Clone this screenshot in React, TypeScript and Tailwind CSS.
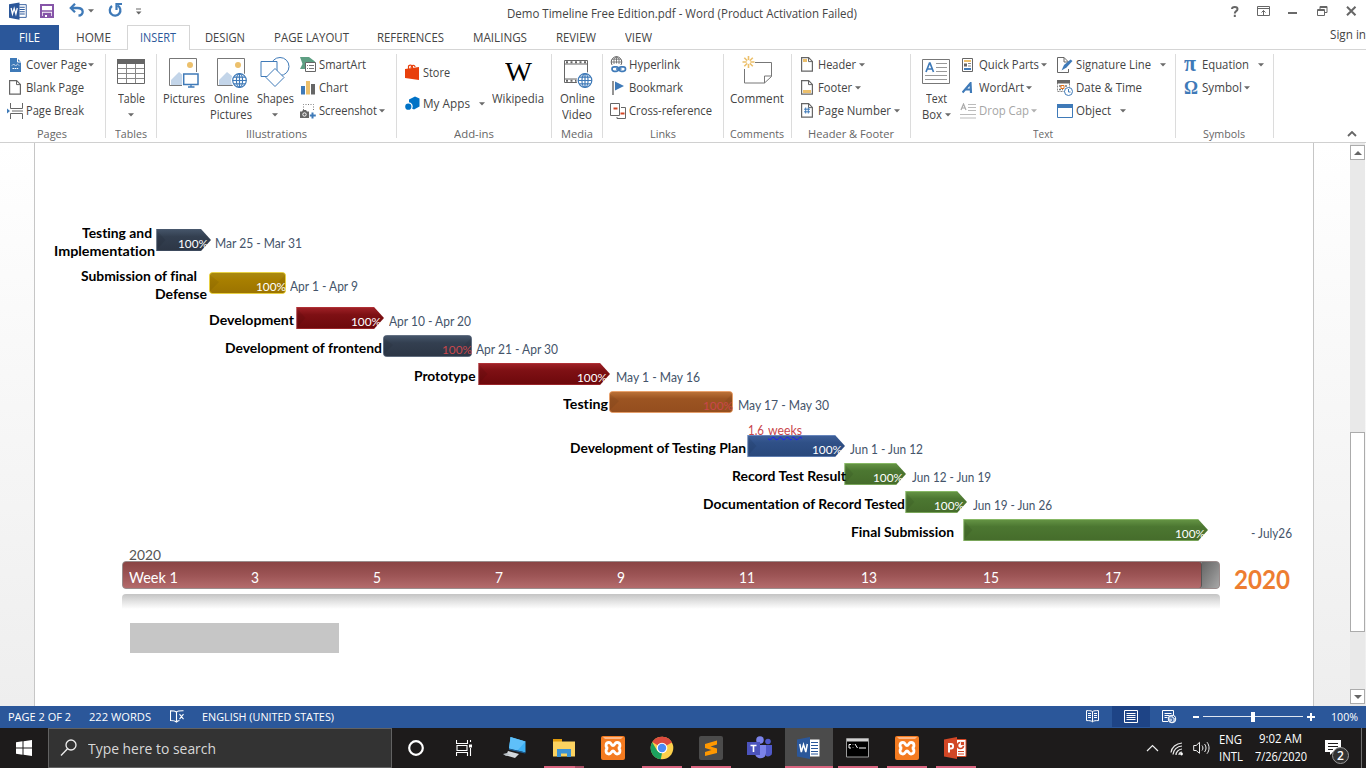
import React, { useLayoutEffect, useRef } from "react";

const UI = "font-['Open_Sans','Noto_Sans',sans-serif]";
const DOC = "font-['Lato','Open_Sans',sans-serif] [font-variant-ligatures:none]";

/* One line of text, condensed or widened to fill the width of its box. */
function Fit({ className = "", children }: { className?: string; children: React.ReactNode }) {
  const box = useRef<HTMLSpanElement>(null);
  const ink = useRef<HTMLSpanElement>(null);
  useLayoutEffect(() => {
    if (!box.current || !ink.current) return;
    ink.current.style.transform = "none";
    const natural = ink.current.getBoundingClientRect().width;
    const target = box.current.getBoundingClientRect().width;
    if (natural > 0) ink.current.style.transform = `scaleX(${target / natural})`;
  });
  return (
    <span ref={box} className={`block shrink-0 whitespace-nowrap ${className}`}>
      <span ref={ink} className="inline-block origin-left">{children}</span>
    </span>
  );
}

function Arrow({ className = "", color = "#6a6a6a" }: { className?: string; color?: string }) {
  return (
    <svg className={`shrink-0 ${className}`} width="6" height="4" viewBox="0 0 6 4">
      <path d="M0 .3h6L3 3.6z" fill={color} />
    </svg>
  );
}

type BoxProps = { w: number; h: number; className?: string; children: React.ReactNode };
function Ico({ w, h, className = "", children }: BoxProps) {
  return (
    <svg className={`block shrink-0 ${className}`} width={w} height={h} viewBox={`0 0 ${w} ${h}`} fill="none">
      {children}
    </svg>
  );
}

/* ---------- title bar and tabs ---------- */

function WordMark({ size = 17 }: { size?: number }) {
  return (
    <svg className="block shrink-0" width={size} height={size} viewBox="0 0 24 24">
      <path d="M12 3.5h11v17H12z" fill="#fff" stroke="#2b579a" strokeWidth="1.2" />
      <path d="M14 7h7M14 10h7M14 13h7M14 16h7" stroke="#2b579a" strokeWidth="1.5" />
      <path d="M0 3 14 .5v23L0 21z" fill="#2b579a" />
      <path d="m2.8 8 1.8 8 2.3-7.5L9.2 16 11 8" fill="none" stroke="#fff" strokeWidth="1.7" />
    </svg>
  );
}

function TitleBar() {
  return (
    <div className="flex h-[25px] items-start">
      <div className="ml-[9px] mt-[2px]"><WordMark size={18} /></div>
      <Ico w={14} h={14} className="ml-[13px] mt-1">
        <path d="M1 1h12v12H1z" stroke="#8655a8" strokeWidth="2" />
        <path d="M1 7h12M3.5 13V9.500h7V13" stroke="#8655a8" strokeWidth="1.6" />
        <path d="M4 10h6v4H4z" fill="#8655a8" /><path d="M5 11h2v2H5z" fill="#fff" />
      </Ico>
      <Ico w={15} h={14} className="ml-[15px] mt-[3px]">
        <path d="M2 5h6.500c7 0 6.500 7.500 1 7.500" stroke="#3f7ab8" strokeWidth="2.300" />
        <path d="M6 .8 1.800 5 6 9.200" stroke="#3f7ab8" strokeWidth="2.300" />
      </Ico>
      <Arrow className="ml-[4px] mt-[9px]" />
      <Ico w={15} h={15} className="ml-[14px] mt-[3px]">
        <path d="M9.500 2.600A5.300 5.300 0 1 1 4 3" stroke="#3f7ab8" strokeWidth="2.300" />
        <path d="M14 1H8.500v6" stroke="#3f7ab8" strokeWidth="2.200" />
      </Ico>
      <Ico w={6} h={7} className="ml-[13px] mt-[8px]">
        <path d="M0 1h5" stroke="#666" /><path d="M0 3.500h5.500L2.700 6.500z" fill="#666" />
      </Ico>
      <Fit className="ml-[365px] mt-[4px] w-[350px] text-[12px] leading-[19px] text-[#444]">
        Demo Timeline Free Edition.pdf - Word (Product Activation Failed)
      </Fit>
      <Ico w={8} h={12} className="ml-[374px] mt-[6px]">
        <path d="M1 3C1 .4 6.500.4 6.500 3S3.800 4.800 3.800 7.500M3.800 8.700V11" stroke="#666" strokeWidth="2" />
      </Ico>
      <Ico w={14} h={11} className="ml-[18px] mt-[6px]">
        <path d="M.5.5h12v9H.5zM0 2.500h13" stroke="#666" />
        <path d="M6.500 9V4.500M4.500 6.500l2-2 2 2" stroke="#666" />
      </Ico>
      <div className="ml-[17px] mt-[12px] h-[2px] w-[9px] bg-[#6a6a6a]" />
      <Ico w={11} h={10} className="ml-[20px] mt-[6px]">
        <path d="M.5 3.500h7v6h-7zM.5 4.500h7M3 3V.5h7v6H8M3 1.500h7" stroke="#666" />
      </Ico>
      <Ico w={11} h={10} className="ml-[18px] mt-[6px]">
        <path d="m1 .8 8.500 8.500M9.500.8 1 9.300" stroke="#666" strokeWidth="2" />
      </Ico>
    </div>
  );
}

function Tabs() {
  return (
    <div className="flex h-[25px] border-b border-[#d5d5d5] text-[12px] leading-[26px] text-[#444]">
      <div className="h-[25px] w-[59px] bg-[#2b579a] pl-[19px] text-white"><Fit className="w-[21px]">FILE</Fit></div>
      <Fit className="ml-[17px] w-[35px]">HOME</Fit>
      <div className="ml-[16px] h-[25px] w-[63px] border-x border-t border-[#d5d5d5] bg-white pl-[12px] leading-[24px] text-[#2b579a]">
        <Fit className="w-[36px]">INSERT</Fit>
      </div>
      <Fit className="ml-[15px] w-[40px]">DESIGN</Fit>
      <Fit className="ml-[29px] w-[75px]">PAGE LAYOUT</Fit>
      <Fit className="ml-[28px] w-[67px]">REFERENCES</Fit>
      <Fit className="ml-[29px] w-[54px]">MAILINGS</Fit>
      <Fit className="ml-[29px] w-[40px]">REVIEW</Fit>
      <Fit className="ml-[29px] w-[27px]">VIEW</Fit>
      <Fit className="ml-auto w-[36px] leading-[20px]">Sign in</Fit>
    </div>
  );
}

/* ---------- ribbon ---------- */

type GroupProps = { className: string; label: string; labelClass: string; children: React.ReactNode };
function Group({ className, label, labelClass, children }: GroupProps) {
  return (
    <div className={`mt-1 flex h-[84px] shrink-0 flex-col border-r border-[#dcdcdc] ${className}`}>
      <div className="flex h-[71px] shrink-0 items-start">{children}</div>
      <Fit className={`text-[11.500px] leading-[18px] text-[#666] ${labelClass}`}>{label}</Fit>
    </div>
  );
}

type RowProps = { icon: React.ReactNode; text: string; tw: string; arrow?: string; iconBox?: string; muted?: boolean };
function Row({ icon, text, tw, arrow, iconBox = "w-[19px]", muted }: RowProps) {
  return (
    <div className={`flex h-[23px] items-center ${muted ? "text-[#a5a5a5]" : ""}`}>
      <div className={`flex h-[18px] shrink-0 items-center ${iconBox}`}>{icon}</div>
      <Fit className={tw}>{text}</Fit>
      {arrow && <Arrow className={arrow} color={muted ? "#b0b0b0" : "#6a6a6a"} />}
    </div>
  );
}

type BigProps = { className: string; icon: React.ReactNode; a: string; aw: string; b?: React.ReactNode };
function Big({ className, icon, a, aw, b }: BigProps) {
  return (
    <div className={`flex shrink-0 flex-col items-center ${className}`}>
      <div className="flex h-[37px] items-start pt-[2px]">{icon}</div>
      <Fit className={`leading-[16px] ${aw}`}>{a}</Fit>
      <div className="flex h-[16px] items-center leading-[16px]">{b}</div>
    </div>
  );
}

function Globe({ x, y, r }: { x: number; y: number; r: number }) {
  return (
    <g stroke="#3f7ab8" strokeWidth="1.200">
      <circle cx={x} cy={y} r={r} fill="#fff" />
      <ellipse cx={x} cy={y} rx={r * 0.45} ry={r} />
      <path d={`M${x - r} ${y}h${2 * r}M${x} ${y - r}v${2 * r}M${x - r * 0.85} ${y - r * 0.5}h${r * 1.7}M${x - r * 0.85} ${y + r * 0.5}h${r * 1.7}`} />
    </g>
  );
}

function Photo() {
  return (
    <>
      <path d="M.5.5h27v27H.5z" fill="#fff" stroke="#777" />
      <circle cx="21" cy="7" r="3" fill="#ecc06c" />
      <path d="M2 27V22l8-8 5 4v9z" fill="#c3d5e9" />
    </>
  );
}

function PageIcon({ kind }: { kind: "blank" | "header" | "footer" | "number" }) {
  return (
    <Ico w={12} h={15}>
      <path d="M.6.600h7l3.800 3.800v9.800H.6z" fill="#fff" stroke="#666" strokeWidth="1.200" />
      <path d="M7.500.600v4h4" stroke="#666" />
      {kind === "header" && <path d="M2 2h4v3H2z" fill="#ecc06c" />}
      {kind === "footer" && <path d="M2 10h8v3H2z" fill="#ecc06c" />}
      {kind === "number" && <path d="M4.700 4.500v6M7.300 4.500v6M3 6.200h6M3 8.800h6" stroke="#3f7ab8" />}
    </Ico>
  );
}

function Ribbon() {
  return (
    <div className="flex h-[93px] border-b border-[#d0d0d0] text-[12px] leading-[18px] text-[#444]">
      <Group className="w-[106px]" label="Pages" labelClass="ml-[37px] w-[30px]">
        <div className="-mt-px ml-[7px]">
          <Row iconBox="w-[19px] pl-[3px]" tw="w-[61px]" arrow="ml-[1px]" text="Cover Page" icon={
            <Ico w={12} h={14}><path d="M0 0h7l4 4v10H0z" fill="#3f7ab8" /><path d="M7.500 0v4h4" stroke="#fff" /><path d="m2 7.500 1.500-1.500L5.500 8l2-2L9 7.500M2.500 10.500h6" stroke="#fff" strokeDasharray="1.500 .6" /></Ico>} />
          <Row iconBox="w-[19px] pl-[2px]" tw="w-[58px]" text="Blank Page" icon={<PageIcon kind="blank" />} />
          <Row tw="w-[58px]" text="Page Break" icon={
            <Ico w={16} h={16}><path d="M0 5.500 3 8 0 10.500z" fill="#3f7ab8" /><path d="M3.500 0v5.500h12V0M3.500 16v-5.500h12V16M5 8h11" stroke="#666" /></Ico>} />
        </div>
      </Group>

      <Group className="w-[51px]" label="Tables" labelClass="ml-[9px] w-[32px]">
        <Big className="ml-[8px] w-[34px]" aw="w-[27px]" a="Table" b={<Arrow />} icon={
          <Ico w={28} h={28} className="mt-[3px]"><path d="M.5 1h27v23.500H.5z" fill="#fff" stroke="#666" /><path d="M0 0h28v5H0z" fill="#666" /><path d="M1 9.500h26M1 14.500h26M1 19.500h26M9.500 5v19M18.500 5v19" stroke="#888" /></Ico>} />
      </Group>

      <Group className="w-[240px]" label="Illustrations" labelClass="ml-[89px] w-[61px]">
        <Big className="ml-[5px] w-[44px]" aw="w-[42px]" a="Pictures" icon={
          <Ico w={30} h={31} className="mt-[2px]"><Photo /><path d="M13 14h17v14H13z" fill="#fff" /><path d="M14.700 16h14.300v10.500H14.700z" stroke="#3f7ab8" strokeWidth="1.500" fill="#fff" /><path d="M22 26.500v3M19 29h6.500" stroke="#3f7ab8" strokeWidth="1.300" /></Ico>} />
        <Big className="ml-[2px] w-[46px]" aw="w-[35px]" a="Online" b={<Fit className="w-[42px]">Pictures</Fit>} icon={
          <Ico w={31} h={31} className="ml-[2px] mt-[2px]"><Photo /><circle cx="22.500" cy="22.500" r="8.500" fill="#fff" /><Globe x={22.5} y={22.5} r={6.800} /></Ico>} />
        <Big className="ml-0 w-[42px]" aw="w-[37px]" a="Shapes" b={<Arrow />} icon={
          <Ico w={30} h={31} className="mt-[1px]"><circle cx="20" cy="9.500" r="9" stroke="#3f7ab8" /><path d="M1 4.500h16v15H1z" fill="#fff" stroke="#3f7ab8" /><path d="m15 11.500 9 9-9 9-9-9z" fill="#fff" stroke="#3f7ab8" /></Ico>} />
        <div className="-mt-px ml-[4px]">
          <Row tw="w-[47px]" text="SmartArt" icon={
            <Ico w={16} h={17}><path d="M0 1h9l6 4.500-3 4.500H5v3H0l2.500-5z" fill="#5e9f83" /><path d="M5.500 6.500h10v9h-10z" fill="#fff" stroke="#666" /><path d="M7 9.500h1M7 12.500h1M9 9.500h5M9 12.500h5" stroke="#777" /></Ico>} />
          <Row tw="w-[29px]" text="Chart" icon={
            <Ico w={16} h={15}><path d="M1 6h4v8.500H1z" fill="#3f7ab8" /><path d="M6 1h4v13.500H6z" fill="#ecc06c" /><path d="M11 4h4v10.500h-4z" fill="#666" /></Ico>} />
          <Row tw="w-[58px]" arrow="ml-[2px]" text="Screenshot" icon={
            <Ico w={16} h={16}><path d="M3.500 7V1.500h10v7" stroke="#777" strokeDasharray="1 1.500" /><path d="M0 8.500h2l1-1.500h3l1 1.500h2V15H0z" fill="#666" /><circle cx="4.500" cy="11.500" r="1.700" stroke="#fff" /><path d="M12.500 9.500v6M9.800 12.500h6" stroke="#3f7ab8" strokeWidth="2" /></Ico>} />
        </div>
      </Group>

      <Group className="w-[155px]" label="Add-ins" labelClass="ml-[57px] w-[40px]">
        <div className="ml-[8px] flex flex-col gap-[8px] pt-[7px]">
          <Row iconBox="w-[18px]" tw="w-[27px]" text="Store" icon={
            <Ico w={15} h={17}><path d="m0 5 14-2v13L0 14z" fill="#e8400c" /><path d="M3.500 5V2c2-2 4-.5 4 1V5M6 4C6 1 10 .5 10 3" stroke="#e8400c" strokeWidth="1.200" /></Ico>} />
          <Row iconBox="w-[18px]" tw="w-[47px]" arrow="ml-[9px]" text="My Apps" icon={
            <Ico w={15} h={15}><path d="m4 3.500 6-3 4.500 2v8L9 13.500 4 11z" fill="#0072c6" /><circle cx="3.500" cy="10.500" r="4.200" fill="#fff" /><circle cx="3.300" cy="10.700" r="3.100" fill="#0072c6" /></Ico>} />
        </div>
        <Big className="ml-[6px] w-[54px]" aw="w-[52px]" a="Wikipedia" icon={
          <Fit className="mt-[3px] w-[27px] font-['Liberation_Serif',serif] text-[27px] leading-[26px] text-black">W</Fit>} />
      </Group>

      <Group className="w-[51px]" label="Media" labelClass="ml-[9px] w-[32px]">
        <Big className="ml-[6px] w-[38px]" aw="w-[35px]" a="Online" b={<Fit className="w-[30px]">Video</Fit>} icon={
          <Ico w={29} h={29} className="ml-[3px] mt-[4px]"><path d="M.5.5h23v22H.5zM.5 4h23M.5 19h23" stroke="#666" /><path d="M2 2.200h20M2 20.800h11" stroke="#666" strokeWidth="2" strokeDasharray="2 2.500" /><circle cx="21" cy="20.500" r="8.500" fill="#fff" /><Globe x={21} y={20.5} r={6.800} /></Ico>} />
      </Group>

      <Group className="w-[121px]" label="Links" labelClass="ml-[47px] w-[26px]">
        <div className="-mt-px ml-[7px]">
          <Row tw="w-[51px]" text="Hyperlink" icon={
            <Ico w={17} h={17}><circle cx="6.500" cy="6" r="5.300" stroke="#666" /><path d="M1 6h11M6.500.500v7M2 3.200h9M4 8V3.500l2-3M9 8V3.500l-2-3" stroke="#666" strokeWidth=".8" /><path d="M0 9h17v8H0z" fill="#fff" /><rect x="2" y="10.800" width="6.500" height="4.500" rx="2.200" stroke="#3f7ab8" strokeWidth="1.700" /><rect x="9" y="10.800" width="6.500" height="4.500" rx="2.200" stroke="#3f7ab8" strokeWidth="1.700" /><path d="M6 13h5.500" stroke="#3f7ab8" strokeWidth="1.600" /></Ico>} />
          <Row iconBox="w-[19px] pl-[2px]" tw="w-[54px]" text="Bookmark" icon={
            <Ico w={13} h={14}><path d="M1 0v14" stroke="#666" strokeWidth="1.400" /><path d="M3 .5 12 5 3 9.500z" fill="#3f7ab8" /></Ico>} />
          <Row tw="w-[83px]" text="Cross-reference" icon={
            <Ico w={16} h={16}><path d="M.5.5h9v12h-9z" stroke="#666" /><path d="M3.500 4.500h4v2h-4z" fill="#d24726" /><path d="M7 14v1.500h8.500v-11H11" stroke="#666" /><path d="M10.500 9.500h4v2h-4z" fill="#d24726" /></Ico>} />
        </div>
      </Group>

      <Group className="w-[68px]" label="Comments" labelClass="ml-[6px] w-[54px]">
        <Big className="ml-[6px] w-[54px]" aw="w-[54px]" a="Comment" icon={
          <Ico w={30} h={30}><path d="M13 6.500h16.500v14l-7 6.500h-20V13M29.500 20h-7v7" stroke="#777" /><path d="M6.500 0v12M.5 6h12M2.300 1.800l8.500 8.500M10.800 1.800l-8.500 8.500" stroke="#ecc06c" strokeWidth="1.600" /><circle cx="6.500" cy="6" r="2" fill="#fff" /></Ico>} />
      </Group>

      <Group className="w-[119px]" label="Header & Footer" labelClass="ml-[16px] w-[86px]">
        <div className="-mt-px ml-[9px]">
          <Row iconBox="w-[17px]" tw="w-[38px]" arrow="ml-[3px]" text="Header" icon={<PageIcon kind="header" />} />
          <Row iconBox="w-[17px]" tw="w-[34px]" arrow="ml-[3px]" text="Footer" icon={<PageIcon kind="footer" />} />
          <Row iconBox="w-[17px]" tw="w-[73px]" arrow="ml-[3px]" text="Page Number" icon={<PageIcon kind="number" />} />
        </div>
      </Group>

      <Group className="w-[265px]" label="Text" labelClass="ml-[122px] w-[20px]">
        <Big className="ml-[10px] w-[30px]" aw="w-[21px]" a="Text" b={<><Fit className="w-[20px]">Box</Fit><Arrow className="ml-[3px]" /></>} icon={
          <Ico w={28} h={25} className="mt-[3px]"><path d="M.5.500h27v24H.5z" fill="#fff" stroke="#777" /><path d="m4 13 3.500-9h.5l3.500 9M5.300 10h5" stroke="#3f7ab8" strokeWidth="1.700" /><path d="M14 4.500h11M14 8.500h11M14 12.500h11M3 16.500h22M3 20.500h22" stroke="#999" /></Ico>} />
        <div className="-mt-px ml-[9px]">
          <Row iconBox="w-[19px] pl-[2px]" tw="w-[60px]" arrow="ml-[2px]" text="Quick Parts" icon={
            <Ico w={11} h={14}><path d="M.5.500h10v13H.5z" stroke="#666" /><path d="M2 2h7v2H2z" fill="#ecc06c" /><path d="M2 5.500h3v3H2z" fill="#666" /><path d="M6 5.500h3M6 8h3" stroke="#888" /><path d="M2 10h7v2H2z" fill="#3f7ab8" /></Ico>} />
          <Row iconBox="w-[19px] pl-[2px]" tw="w-[45px]" arrow="ml-[2px]" text="WordArt" icon={
            <Ico w={12} h={12}><path d="M.5 10.500 8.500 1.200 9 11M3.500 7.500h6" stroke="#3f7ab8" strokeWidth="2.200" /></Ico>} />
          <Row muted tw="w-[50px]" arrow="ml-[2px]" text="Drop Cap" icon={
            <Ico w={16} h={16}><path d="M1 7 3.500 1 6 7M2 5h3" stroke="#aaa" strokeWidth="1.200" /><path d="M8 1.500h8M8 4.500h8M8 7.500h8M0 11.500h16M0 15h16" stroke="#bbb" /></Ico>} />
        </div>
        <div className="-mt-px ml-[10px] w-[112px] shrink-0">
          <Row tw="w-[75px]" arrow="ml-[9px]" text="Signature Line" icon={
            <Ico w={16} h={16}><path d="M9 15.500H.5V.500H7L11.500 5M7 .5V5h4M11.500 12v3.500H8" stroke="#666" /><path d="M4.500 13.500 7 8l6.500-5.500 2 1.500-6 6.500z" fill="#3f7ab8" /></Ico>} />
          <Row tw="w-[66px]" text="Date & Time" icon={
            <Ico w={16} h={16}><path d="M.5.500h12v11H.5z" stroke="#888" strokeDasharray="2 1" /><path d="M0 0h13v3.500H0z" fill="#666" /><path d="M2 6h9M2 9.500h4" stroke="#777" strokeWidth="1.500" strokeDasharray="2 1" /><path d="M4 5.500h3v3H4z" stroke="#e0701c" fill="#fff" /><circle cx="11.500" cy="11.500" r="4" fill="#fff" stroke="#3f7ab8" /><path d="M11.500 9v3h2" stroke="#3f7ab8" /></Ico>} />
          <Row tw="w-[35px]" arrow="ml-[9px]" text="Object" icon={
            <Ico w={16} h={14}><path d="M.5.500h15v13H.5z" fill="#fff" stroke="#3f7ab8" /><path d="M0 0h16v4H0z" fill="#3f7ab8" /></Ico>} />
        </div>
      </Group>

      <Group className="w-[98px]" label="Symbols" labelClass="ml-[27px] w-[42px]">
        <div className="-mt-px ml-[8px]">
          <Row iconBox="w-[18px]" tw="w-[47px]" arrow="ml-[9px]" text="Equation" icon={
            <Fit className="-mt-[2px] w-[12px] font-['Liberation_Serif',serif] text-[23px] font-bold leading-[14px] text-[#3f7ab8]">π</Fit>} />
          <Row iconBox="w-[18px]" tw="w-[40px]" arrow="ml-[2px]" text="Symbol" icon={
            <Fit className="w-[14px] font-['Liberation_Serif',serif] text-[18px] font-bold leading-[16px] text-[#3f7ab8]">Ω</Fit>} />
        </div>
      </Group>

      <Ico w={10} h={6} className="ml-[73px] mt-[81px]"><path d="m1 5 4-4 4 4" stroke="#666" strokeWidth="1.800" /></Ico>
    </div>
  );
}

/* ---------- document ---------- */

type Tone = "slate" | "gold" | "red" | "brown" | "blue" | "green";
type Task = {
  label: string[]; ends: number[]; widths: number[]; x: number; w: number; gap: number; tone: Tone;
  arrow: boolean; pct: string; date: string; dateX: number; dateW: number; note?: string;
};

const tones: Record<Tone, { top: string; mid: string; low: string; edge: string }> = {
  slate: { top: "#46566b", mid: "#333f50", low: "#2c3645", edge: "#4b5a70" },
  gold: { top: "#a98a12", mid: "#a87f00", low: "#9b7300", edge: "#f0d62a" },
  red: { top: "#a12228", mid: "#7e1014", low: "#6c080b", edge: "#bb3c42" },
  brown: { top: "#bd7338", mid: "#9c5422", low: "#944e1e", edge: "#ee9a5c" },
  blue: { top: "#3f6099", mid: "#2f5087", low: "#29487b", edge: "#8aa6da" },
  green: { top: "#679646", mid: "#4c7731", low: "#456c2b", edge: "#a3d47f" },
};

const tasks: Task[] = [
  { label: ["Testing and", "Implementation"], ends: [152, 155], widths: [70, 101], x: 156, w: 55, gap: 0, tone: "slate", arrow: true, pct: "#fff", date: "Mar 25 - Mar 31", dateX: 215, dateW: 87 },
  { label: ["Submission of final", "Defense"], ends: [197, 207], widths: [116, 52], x: 209, w: 77, gap: 21, tone: "gold", arrow: false, pct: "#fff", date: "Apr 1 - Apr 9", dateX: 290, dateW: 68 },
  { label: ["Development"], ends: [294], widths: [85], x: 296, w: 88, gap: 13, tone: "red", arrow: true, pct: "#fff", date: "Apr 10 - Apr 20", dateX: 389, dateW: 82 },
  { label: ["Development of frontend"], ends: [382], widths: [157], x: 383, w: 89, gap: 6, tone: "slate", arrow: false, pct: "#c9474c", date: "Apr 21 - Apr 30", dateX: 476, dateW: 82 },
  { label: ["Prototype"], ends: [475.5], widths: [61.5], x: 478, w: 132, gap: 6, tone: "red", arrow: true, pct: "#fff", date: "May 1 - May 16", dateX: 616, dateW: 84 },
  { label: ["Testing"], ends: [608], widths: [45], x: 609, w: 124, gap: 6, tone: "brown", arrow: false, pct: "#c9474c", date: "May 17 - May 30", dateX: 738, dateW: 91 },
  { label: ["Development of Testing Plan"], ends: [746], widths: [176], x: 747, w: 98, gap: 22, tone: "blue", arrow: true, pct: "#fff", date: "Jun 1 - Jun 12", dateX: 850, dateW: 73, note: "1.6" },
  { label: ["Record Test Result"], ends: [846], widths: [114], x: 844, w: 62, gap: 6, tone: "green", arrow: true, pct: "#fff", date: "Jun 12 - Jun 19", dateX: 912, dateW: 79 },
  { label: ["Documentation of Record Tested"], ends: [905], widths: [202], x: 905, w: 62, gap: 6, tone: "green", arrow: true, pct: "#fff", date: "Jun 19 - Jun 26", dateX: 973, dateW: 79 },
  { label: ["Final Submission"], ends: [954], widths: [103], x: 963, w: 245, gap: 6, tone: "green", arrow: true, pct: "#fff", date: "- July26", dateX: 1251, dateW: 41 },
];

function Bar({ task, id }: { task: Task; id: string }) {
  const c = tones[task.tone];
  const w = task.w;
  return (
    <svg className="block" width={w} height="22" viewBox={`0 0 ${w} 22`}>
      <defs>
        <linearGradient id={id} x1="0" y1="0" x2="0" y2="1">
          <stop offset="0" stopColor={c.top} /><stop offset=".35" stopColor={c.mid} /><stop offset="1" stopColor={c.low} />
        </linearGradient>
      </defs>
      {task.arrow ? (
        <>
          <path d={`M.5 0H${w - 10}L${w} 11 ${w - 10} 22H.5z`} fill={`url(#${id})`} />
          <path d="M.5 1v20l9-10z" fill="#000" opacity=".07" />
          <path d={`M.5.500H${w - 10}M.5 21.500H${w - 10}M.8 0v22`} stroke={c.edge} strokeWidth=".7" opacity=".8" />
        </>
      ) : (
        <>
          <rect x=".5" y=".5" width={w - 1} height="21" rx="3" fill={`url(#${id})`} />
          <path d={`M1 3v16l9-9zM${w - 1} 3v16l-7-9z`} fill="#000" opacity=".06" />
          <rect x=".5" y=".5" width={w - 1} height="21" rx="3" fill="none" stroke={c.edge} strokeWidth=".9" opacity=".8" />
        </>
      )}
    </svg>
  );
}

/* A line of text whose width comes from the task data. */
function Sized({ w, children }: { w: number; children: React.ReactNode }) {
  return (
    <div style={{ width: w }}>
      <Fit className="w-full">{children}</Fit>
    </div>
  );
}

function TaskRow({ task, i }: { task: Task; i: number }) {
  const two = task.label.length === 2;
  return (
    <div className="relative flex h-[22px] items-start" style={{ marginTop: task.gap }}>
      <div className={`relative z-10 shrink-0 text-[14px] font-bold leading-[18px] text-black ${two ? "-mt-[5px]" : "mt-[4px]"}`} style={{ width: task.x - 35 }}>
        {task.label.map((line, k) => (
          <div key={line} style={{ marginLeft: task.ends[k] - task.widths[k] - 35 }}>
            <Sized w={task.widths[k]}>{line}</Sized>
          </div>
        ))}
      </div>
      <div className="relative h-[22px] shrink-0" style={{ width: task.w }}>
        <Bar task={task} id={`bar${i}`} />
        <div className={`absolute top-[6px] text-[12px] leading-[17px] ${task.arrow ? "right-[3px]" : "right-0"}`} style={{ color: task.pct }}>
          <Fit className="w-[30px]">100%</Fit>
        </div>
        {task.note && (
          <div className="absolute -top-[12px] left-px flex gap-[4px] text-[12.500px] leading-[16px] text-[#c9474c]">
            <Fit className="w-[16px]">{task.note}</Fit>
            <Fit className="w-[34px]">
              <span className="underline decoration-[#1a1aff] decoration-wavy decoration-1 underline-offset-1">weeks</span>
            </Fit>
          </div>
        )}
      </div>
      <div className="mt-[6px] text-[12.500px] leading-[17px] text-[#44546a]" style={{ marginLeft: task.dateX - task.x - task.w }}>
        <Sized w={task.dateW}>{task.date}</Sized>
      </div>
    </div>
  );
}

function WeekAxis() {
  return (
    <div className="ml-[87px] mt-[5px]">
      <Fit className="ml-[7px] w-[32px] text-[14px] leading-[17px] text-[#555]">2020</Fit>
      <div className="-mt-[2px] flex items-start">
        <div className="flex h-[28px] w-[1098px] overflow-hidden rounded-[4px] border border-[#9a8c8c] bg-[#8b8b8b]">
          <div className="flex h-full w-[1079px] shrink-0 overflow-hidden rounded-r-[3px] border-r border-[#555] bg-linear-to-b from-[#8a4444] via-[#9c5455] to-[#b46b6c] pl-[6px] pt-[6px] text-[15px] leading-[19px] text-white">
            <div className="w-[122px] shrink-0"><Fit className="w-[49px]">Week 1</Fit></div>
            {["3", "5", "7", "9"].map((n) => <div key={n} className="w-[122px] shrink-0"><Fit className="w-[8px]">{n}</Fit></div>)}
            {["11", "13", "15", "17"].map((n) => <div key={n} className="w-[122px] shrink-0"><Fit className="w-[16px]">{n}</Fit></div>)}
          </div>
          <div className="h-full flex-1 bg-linear-to-br from-[#666] via-[#858585] to-[#a8a8a8]" />
        </div>
        <Fit className="ml-[14px] mt-[4px] w-[56px] text-[26px] font-bold leading-[28px] text-[#ed7d31]">2020</Fit>
      </div>
      <div className="mt-px h-[15px] w-[1098px] rounded-t-[4px] bg-linear-to-b from-[#c4c4c4] via-[#e3e3e3] to-white" />
    </div>
  );
}

function Document() {
  return (
    <div className="flex h-[563px] bg-linear-to-b from-white to-[#eeeeee]">
      <div className={`ml-[34px] w-[1280px] border-x border-[#c6c6c6] bg-white pt-[86px] ${DOC}`}>
        {tasks.map((t, i) => <TaskRow key={t.date} task={t} i={i} />)}
        <WeekAxis />
        <div className="ml-[95px] mt-[14px] h-[30px] w-[209px] bg-[#c6c6c6]" />
      </div>
      <div className="ml-auto mr-px flex w-[15px] flex-col items-center bg-[#e9e9e9] pt-[2px]">
        <div className="flex h-[15px] w-[15px] items-center justify-center border border-[#ababab] bg-white">
          <Ico w={8} h={4}><path d="M0 4 4 0l4 4z" fill="#666" /></Ico>
        </div>
        <div className="mt-[272px] h-[200px] w-[15px] border border-[#ababab] bg-white" />
        <div className="mb-[2px] mt-auto flex h-[15px] w-[15px] items-center justify-center border border-[#ababab] bg-white">
          <Ico w={8} h={4}><path d="m0 0 4 4 4-4z" fill="#666" /></Ico>
        </div>
      </div>
    </div>
  );
}

/* ---------- status bar ---------- */

function StatusBar() {
  return (
    <div className="flex h-[22px] items-center bg-[#2b579a] pb-px text-[11.500px] leading-[19px] text-white">
      <Fit className="-mt-px ml-[8px] w-[63px]">PAGE 2 OF 2</Fit>
      <Fit className="-mt-px ml-[18px] w-[62px]">222 WORDS</Fit>
      <Ico w={15} h={13} className="ml-[19px]">
        <path d="M6.500 11.500V2C5 .8 3 .8.500.8v9.700c3 0 4.500 0 6 1.500 1-1 2-1.300 3-1.500M6.500 2C7.500 1 10 .8 12.500.8h1M9.500 4.200l4 5M13.500 4.200l-4 5" stroke="#fff" strokeWidth="1.100" />
      </Ico>
      <Fit className="-mt-px ml-[17px] w-[132px]">ENGLISH (UNITED STATES)</Fit>
      <Ico w={13} h={13} className="ml-[752px]">
        <path d="M6.500 11.800V1.500C5 .6 3 .6.500.6v10c3 0 4.500 0 6 1.200 1.500-1.200 3-1.200 6-1.200V.6c-2.500 0-4.500 0-6 .9M2 3.500h3M2 5.500h3M2 7.500h3M8 3.500h3M8 5.500h3M8 7.500h3" stroke="#fff" />
      </Ico>
      <div className="ml-[13px] flex h-[21px] w-[38px] items-center justify-center bg-[#1e4486]">
        <Ico w={14} h={13}><path d="M.5.500h13v12H.5zM2.500 3.500h9M2.500 5.500h9M2.500 7.500h9M2.500 9.500h9" stroke="#fff" /></Ico>
      </div>
      <Ico w={15} h={14} className="ml-[12px]">
        <path d="M6 11.500H.500V.500h11V5M2.500 3.500h7M2.500 5.500h5M2.500 7.500h3" stroke="#fff" />
        <circle cx="10" cy="9" r="3.800" fill="#b7c9e4" stroke="#fff" /><path d="M7.500 8h2.500l1 2-1.500 2M11 6l2 2" stroke="#2b579a" />
      </Ico>
      <div className="ml-[16px] h-[2px] w-[6px] bg-white" />
      <div className="ml-[4px] flex h-[10px] w-[100px] items-center">
        <div className="h-px w-[48px] bg-[#dfe6f1]" /><div className="h-[10px] w-[4px] bg-white" /><div className="h-px w-[48px] bg-[#dfe6f1]" />
      </div>
      <Ico w={8} h={8} className="ml-[4px]"><path d="M4 0v8M0 4h8" stroke="#fff" strokeWidth="2" /></Ico>
      <Fit className="-mt-px ml-[16px] w-[27px]">100%</Fit>
    </div>
  );
}

/* ---------- taskbar ---------- */

function Xampp() {
  return (
    <Ico w={24} h={24}>
      <rect width="24" height="24" rx="2" fill="#f47b20" /><path d="M2 1h20l-2 2H4z" fill="#fbb889" />
      <path d="M8 6.500c2.500 0 2.200 3 4 3s1.500-3 4-3c4 0 3.500 5 1 5.700 2.500.5 3 5.800-1 5.800-2.500 0-2.200-3-4-3s-1.500 3-4 3c-4 0-3.500-5.300-1-5.800-2.500-.7-3-5.700 1-5.700z" stroke="#fff" strokeWidth="2.800" />
    </Ico>
  );
}

type TaskButtonProps = { children: React.ReactNode; line?: string; running?: boolean; active?: boolean };
function TaskButton({ children, line = "ml-[5px] w-[40px]", running = true, active = false }: TaskButtonProps) {
  return (
    <div className={`flex h-[40px] w-[49px] shrink-0 flex-col ${active ? "border-l border-[#1c1c1c] bg-[#4b4b4b]" : ""}`}>
      <div className="flex h-[38px] items-center justify-center pt-[2px]">{children}</div>
      {running && <div className={`h-[2px] bg-[#d9647f] ${line}`} />}
    </div>
  );
}

function Taskbar() {
  return (
    <div className="flex h-[40px] items-start bg-[#1d1b1b] text-white">
      <Ico w={16} h={16} className="ml-[16px] mt-[12px]">
        <path d="M0 2.300 6.500 1.300v6.200H0zM7.500 1.200 16 0v7.500H7.500zM0 8.500h6.500v6.200L0 13.700zM7.500 8.500H16V16l-8.500-1.200z" fill="#fff" />
      </Ico>
      <div className="ml-[16px] flex h-[40px] w-[344px] items-center border border-[#626262] bg-[#333]">
        <Ico w={18} h={18} className="ml-[11px]"><circle cx="11" cy="6" r="5" stroke="#eee" strokeWidth="1.300" /><path d="M7.500 9.700 1 16.500" stroke="#eee" strokeWidth="1.300" /></Ico>
        <Fit className="ml-[10px] w-[128px] text-[15px] leading-[22px] text-[#d8d8d8]">Type here to search</Fit>
      </div>
      <Ico w={18} h={18} className="ml-[15px] mt-[11px]"><circle cx="9" cy="9" r="6.800" stroke="#fff" strokeWidth="2.200" /></Ico>
      <Ico w={17} h={16} className="ml-[31px] mt-[12px]">
        <path d="M.5 0v3.500h11V0M.5 16v-3.500h11V16M1 5.500h10v5H1zM14.500 0v2M14.500 8v8" stroke="#fff" strokeWidth="1.100" /><path d="M13 4.500h3v3h-3z" fill="#fff" />
      </Ico>
      <div className="ml-[17px] flex">
        <TaskButton running={false}>
          <Ico w={23} h={22}><path d="m7.500 0 15 4.500v11L6 11.500z" fill="#3eb1f5" /><path d="m7.500 0 15 4.500-8 9L6 11.500z" fill="#5fc0f9" /><path d="m6 11.500 16.500 4-.3 1L5.800 12.800z" fill="#1c5f96" /><path d="m5 14 11 3-4 4-9-2.500z" fill="#d3d8dc" /><path d="m0 17 4-1 3 1.500-4 1.500z" fill="#b9c0c6" /></Ico>
        </TaskButton>
        <TaskButton line="ml-[5px] w-[40px] border-r-[9px] border-[#a34b60]">
          <Ico w={22} h={20}><path d="M0 1h9v4H0z" fill="#e09a0b" /><path d="M0 3.500h22V18.500H0z" fill="#fbd260" /><path d="M4 19v-8h14v8h-4v-3.500H8V19z" fill="#3c92d4" /></Ico>
        </TaskButton>
        <TaskButton running={false}><Xampp /></TaskButton>
        <TaskButton>
          <Ico w={24} h={24}>
            <circle cx="12" cy="12" r="11.300" fill="#fcd04b" />
            <path d="M12 12 2.300 6.100A11.300 11.300 0 0 1 21.800 6.400z" fill="#dd4b3e" /><path d="M12 .7A11.300 11.300 0 0 1 22 6.700H12z" fill="#dd4b3e" />
            <path d="M2.200 6.300 7.400 15 12 17l-1.200 6.300A11.300 11.300 0 0 1 2.200 6.300z" fill="#1ca15f" />
            <circle cx="12" cy="12" r="5.300" fill="#fff" /><circle cx="12" cy="12" r="4.200" fill="#4c8bf5" />
          </Ico>
        </TaskButton>
        <TaskButton>
          <Ico w={24} h={24}><rect width="24" height="24" rx="2" fill="#4b4b4b" /><path d="M18 4.500v4l-6.500 2 6.500 2v4.500L6 20v-4l6.500-2L6 12V8z" fill="#ff9800" /></Ico>
        </TaskButton>
        <TaskButton running={false}>
          <Ico w={25} h={24}>
            <circle cx="13" cy="4" r="3.800" fill="#7b83eb" /><circle cx="21" cy="5.500" r="2.800" fill="#5059c9" />
            <path d="M17 9h8v8c0 3-4 4-6 3z" fill="#5059c9" /><path d="M8 9h11v8c0 7-11 7-11 0z" fill="#7b83eb" /><path d="M0 6h13v13H0z" fill="#4b53bc" /><path d="M3.500 9.500h6M6.500 9.500V16" stroke="#fff" strokeWidth="1.600" />
          </Ico>
        </TaskButton>
        <TaskButton active line="w-[48px]">
          <Ico w={24} h={24}><path d="M11 3.500h11.500v17H11z" fill="#fff" /><path d="M14 6.500h7M14 9.500h7M14 12.500h7M14 15.500h7M14 18h7" stroke="#2b579a" /><path d="M0 3.500 13 1v22L0 20.500z" fill="#2b579a" /><path d="m2.800 8 1.500 8 2.200-7.500L8.800 16l1.500-8" stroke="#fff" strokeWidth="1.500" /></Ico>
        </TaskButton>
        <TaskButton>
          <Ico w={23} h={20}><path d="M.5.500h22v18.500H.5z" fill="#000" stroke="#9b9b9b" /><path d="M1 1h21v2.500H1z" fill="#d2d2d2" /><path d="M5 6.500H3v3.500h2M7 6.500v.5M7 9v.5M9 6l2.500 4M13 10h7" stroke="#fff" /></Ico>
        </TaskButton>
        <TaskButton><Xampp /></TaskButton>
        <TaskButton>
          <Ico w={23} h={24}>
            <path d="M11 3.500h11v17H11z" fill="#fff" stroke="#d24726" />
            <path d="M14 15.500h6M14 18h6" stroke="#d24726" />
            <circle cx="16.500" cy="9.500" r="3" stroke="#d24726" strokeWidth="1.600" /><path d="M16.500 9.500V5.500h4v4z" fill="#d24726" stroke="#fff" strokeWidth=".8" />
            <path d="M0 3.500 13 1v22L0 20.500z" fill="#d24726" /><path d="M5 16.500V8h2c2.800 0 2.800 4.500 0 4.500H5" stroke="#fff" strokeWidth="1.900" />
          </Ico>
        </TaskButton>
      </div>
      <Ico w={13} h={8} className="ml-[166px] mt-[16px]"><path d="m1 7 5.500-5.500L12 7" stroke="#eee" strokeWidth="1.200" /></Ico>
      <Ico w={14} h={14} className="ml-[11px] mt-[14px]">
        <path d="M1 10.500C1.500 5.500 6 1.500 12 1M3 12.500C3.300 8 7 4.300 12 4M6 13c0-3 2.500-5.700 6-6M9 13c0-1.500 1-3 3-3" stroke="#e8e8e8" strokeWidth="1.200" /><circle cx="11.500" cy="12" r="1.400" fill="#fff" />
      </Ico>
      <Ico w={17} h={14} className="ml-[9px] mt-[13px]">
        <path d="M.7 4.500h2.500L6.500 1.300v11L3.200 9.500H.7zM9 4.500c1.200 1.500 1.200 3.500 0 5M11.500 3c2 2.500 2 5.500 0 8M14 1.200c2.700 3.500 2.700 8 0 11.500" stroke="#eee" />
      </Ico>
      <div className="ml-[9px] mt-[3px] text-[12px] leading-[17px]"><Fit className="w-[23px]">ENG</Fit><Fit className="w-[24px]">INTL</Fit></div>
      <div className="ml-[11px] mt-[2px] flex w-[53px] flex-col items-center text-[12px] leading-[18px]"><Fit className="w-[43px]">9:02 AM</Fit><Fit className="w-[52px]">7/26/2020</Fit></div>
      <div className="relative ml-[18px] mt-[12px] h-[24px] w-[26px]">
        <Ico w={16} h={16}><path d="M0 0h16v12H8l-3 3v-3H0z" fill="#fff" /><path d="M3 3.500h10M3 6.500h10M3 9.500h5" stroke="#1d1b1b" /></Ico>
        <div className="absolute left-[7px] top-[7px] flex h-[17px] w-[17px] items-center justify-center rounded-full border border-[#9a9a9a] bg-[#333] text-[12px] font-semibold leading-none">2</div>
      </div>
      <div className="ml-[10px] h-[40px] w-px bg-[#6f6f6f]" />
    </div>
  );
}

export default function App() {
  return (
    <div className={`flex h-[768px] w-[1366px] flex-col overflow-hidden bg-white ${UI}`}>
      <TitleBar />
      <Tabs />
      <Ribbon />
      <Document />
      <StatusBar />
      <Taskbar />
    </div>
  );
}
